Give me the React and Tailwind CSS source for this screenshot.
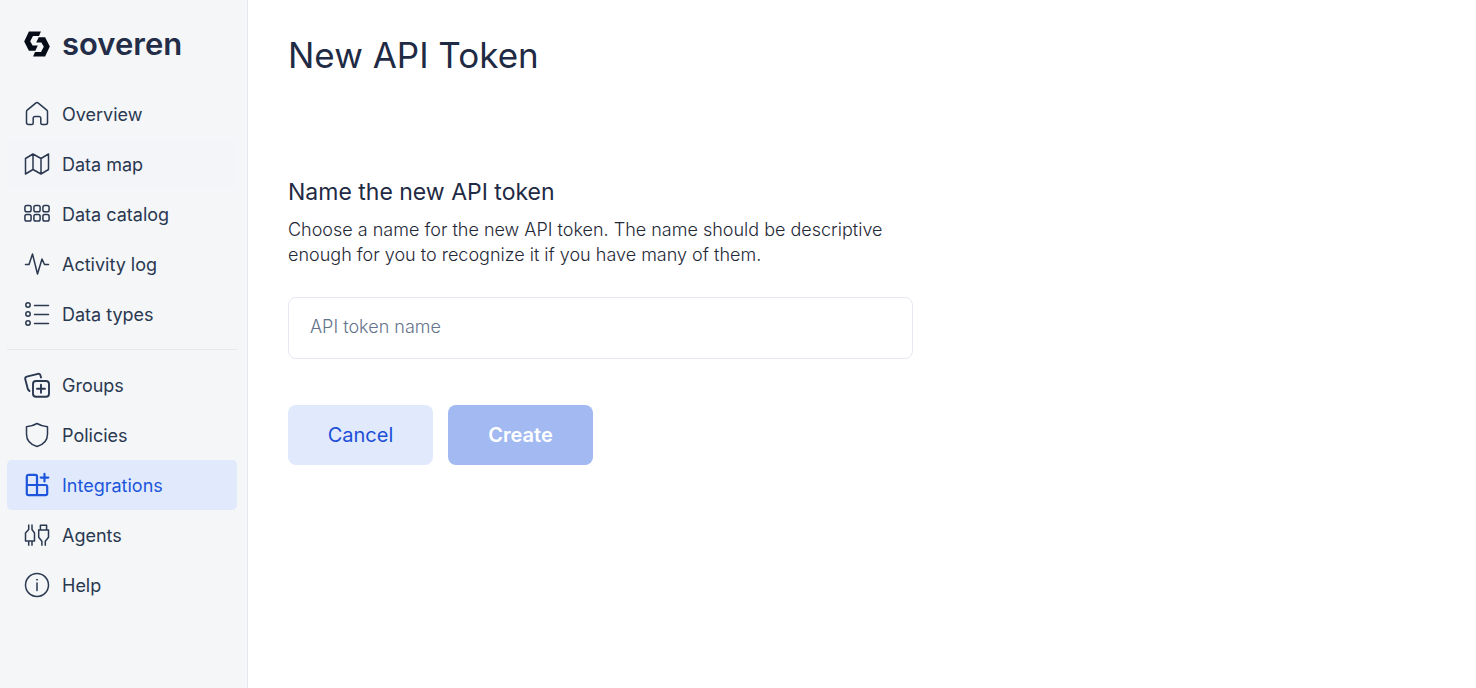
const stroke = {
  fill: "none",
  stroke: "currentColor",
  strokeWidth: 1.5,
  strokeLinejoin: "round",
  strokeLinecap: "round",
};

function Icon({ children }) {
  return (
    <svg viewBox="0 0 26 26" className="size-[26px] shrink-0" aria-hidden="true" {...stroke}>
      {children}
    </svg>
  );
}

const icons = {
  home: (
    <path d="M4.5 23.5h3.2a1.5 1.5 0 0 0 1.5-1.5v-4.7a1.8 1.8 0 0 1 1.800-1.800h4a1.800 1.800 0 0 1 1.800 1.800V22a1.500 1.500 0 0 0 1.500 1.500h3.200a2 2 0 0 0 2-2V10.600a2 2 0 0 0-.7-1.500l-8.500-7a2 2 0 0 0-2.600 0l-8.500 7a2 2 0 0 0-.7 1.500v10.900a2 2 0 0 0 2 2z" />
  ),
  map: (
    <path d="M1.5 7.500 9 3l8 4.500L24.500 3v15.500L17 23l-8-4.500L1.500 23zM9 3v15.500M17 7.500V23" />
  ),
  grid: (
    <>
      {[0.9, 9.9, 18.9].map((x) =>
        [4.4, 13.6].map((y) => (
          <rect key={`${x}-${y}`} x={x} y={y} width="6.2" height="6.4" rx="1.8" />
        ))
      )}
    </>
  ),
  activity: <path d="M1.500 13.500H5L8.500 3l5 20L18 8l2.500 5.500h4" />,
  list: (
    <>
      {[4, 13, 22].map((y) => (
        <g key={y}>
          <circle cx="4" cy={y} r="2.2" />
          <path d={`M10.5 ${y + 0.5}h14`} />
        </g>
      ))}
    </>
  ),
  groups: (
    <g strokeWidth="1.9">
      <rect x="9" y="9" width="16" height="15.8" rx="3" />
      <path d="M17 12.700v8M13 16.700h8M17 5.500l-.6-2.200a2 2 0 0 0-2.400-1.500L2.700 4.700A2 2 0 0 0 1.200 7.100l2.700 10.200 1.600 1.700" />
    </g>
  ),
  shield: (
    <path d="M13 1.500c3.200 2 6.600 2.900 10.500 3.300v7.400c0 6.200-4.200 10.400-10.500 12.300C6.700 22.600 2.500 18.400 2.500 12.200V4.800C6.400 4.400 9.800 3.500 13 1.500z" />
  ),
  integrations: (
    <path
      strokeWidth="2.2"
      d="M13 13V4.500a1.700 1.700 0 0 0-1.700-1.700H4.500a1.700 1.700 0 0 0-1.700 1.700v17a1.700 1.700 0 0 0 1.700 1.700h17a1.700 1.700 0 0 0 1.700-1.700v-6.800a1.700 1.700 0 0 0-1.700-1.700zM2.800 13H13v10.200M20.500 1.800v7.600M16.700 5.600h7.600"
    />
  ),
  agents: (
    <path
      strokeLinecap="butt"
      d="M4.700 2.500V7.500L1.500 11v8h9v-8L8 7.500V2.500M4.700 19v4.700M8 19v4.700M16.400 8V3.200h6.200V8M14.700 8h9.800v7.200l-3.200 4v4.500M14.700 7.300v7.900l3.200 4v4.500"
    />
  ),
  help: (
    <>
      <circle cx="13" cy="13" r="11.5" />
      <path d="M13 11v7.500" />
      <circle cx="13" cy="7.7" r="0.5" fill="currentColor" strokeWidth="0.9" />
    </>
  ),
};

const groups = [
  [
    ["Overview", "home"],
    ["Data map", "map", "hover"],
    ["Data catalog", "grid"],
    ["Activity log", "activity"],
    ["Data types", "list"],
  ],
  [
    ["Groups", "groups"],
    ["Policies", "shield"],
    ["Integrations", "integrations", "active"],
    ["Agents", "agents"],
    ["Help", "help"],
  ],
];

const tones = {
  active: "bg-[#e0eafc] text-[#1d56db]",
  hover: "bg-[#f4f5f9] text-[#2a3850]",
  idle: "text-[#2a3850]",
};

function Logo() {
  return (
    <a href="#" className="flex h-8 items-center gap-3 pl-[17px] text-[#232d47]">
      <svg viewBox="0 0 26 26" className="size-[26px] shrink-0" fill="#060c18" aria-hidden="true">
        <path d="M4.9.4h12L15 5H9L6.200 10.300 8.600 14.500h5.200L11.300 19.700H4.900L.2 10.500z" />
        <path d="M21.100 25.600h-12L11 21h6l2.800-5.300-2.400-4.200h-5.200l2.500-5.200h6.400l4.700 9.200z" />
      </svg>
      <span className="text-[31px] font-semibold leading-8">soveren</span>
    </a>
  );
}

function Sidebar() {
  return (
    <aside className="w-[248px] shrink-0 border-r border-[#e4e8ee] bg-[#f4f6f8] pt-7 pr-2.5 pl-[7px]">
      <Logo />
      <nav className="mt-[29px]">
        {groups.map((items, i) => (
          <ul key={i} className={i > 0 ? "mt-2.5 border-t border-[#e6e9ee] pt-2.5" : ""}>
            {items.map(([label, icon, state]) => (
              <li key={label}>
                <a
                  href="#"
                  aria-current={state === "active" ? "page" : undefined}
                  className={`flex h-[50px] items-center gap-3 rounded-[5px] pl-[17px] text-lg ${tones[state || "idle"]}`}
                >
                  <Icon>{icons[icon]}</Icon>
                  <span className="pt-0.5">{label}</span>
                </a>
              </li>
            ))}
          </ul>
        ))}
      </nav>
    </aside>
  );
}

export default function App() {
  return (
    <div className="flex min-h-screen bg-white font-['Inter',sans-serif] text-[#1f2a44]">
      <Sidebar />
      <main className="min-w-0 flex-1 px-10 pt-8">
        <h1 className="text-[35px] leading-[46px]">New API Token</h1>
        <form className="mt-[98px] max-w-[625px]" onSubmit={(e) => e.preventDefault()}>
          <h2 className="text-[23px] leading-8">
            <label htmlFor="token-name">Name the new API token</label>
          </h2>
          <p id="token-hint" className="mt-[9px] text-lg font-light leading-[25px] text-[#1f2937]">
            Choose a name for the new API token. The name should be descriptive enough for you to
            recognize it if you have many of them.
          </p>
          <input
            id="token-name"
            type="text"
            aria-describedby="token-hint"
            placeholder="API token name"
            className="mt-[30px] h-[62px] w-full rounded-lg border border-[#e5e8f0] px-[21px] pb-1 text-lg font-light outline-none placeholder:text-[#64748b]"
          />
          <div className="mt-[46px] flex gap-[15px]">
            <button
              type="button"
              className="h-[60px] w-[145px] rounded-lg bg-[#e0eafc] text-xl text-[#1d4fd7]"
            >
              Cancel
            </button>
            <button
              type="submit"
              disabled
              className="h-[60px] w-[145px] rounded-lg bg-[#a2baf1] text-xl font-semibold text-white"
            >
              Create
            </button>
          </div>
        </form>
      </main>
    </div>
  );
}
